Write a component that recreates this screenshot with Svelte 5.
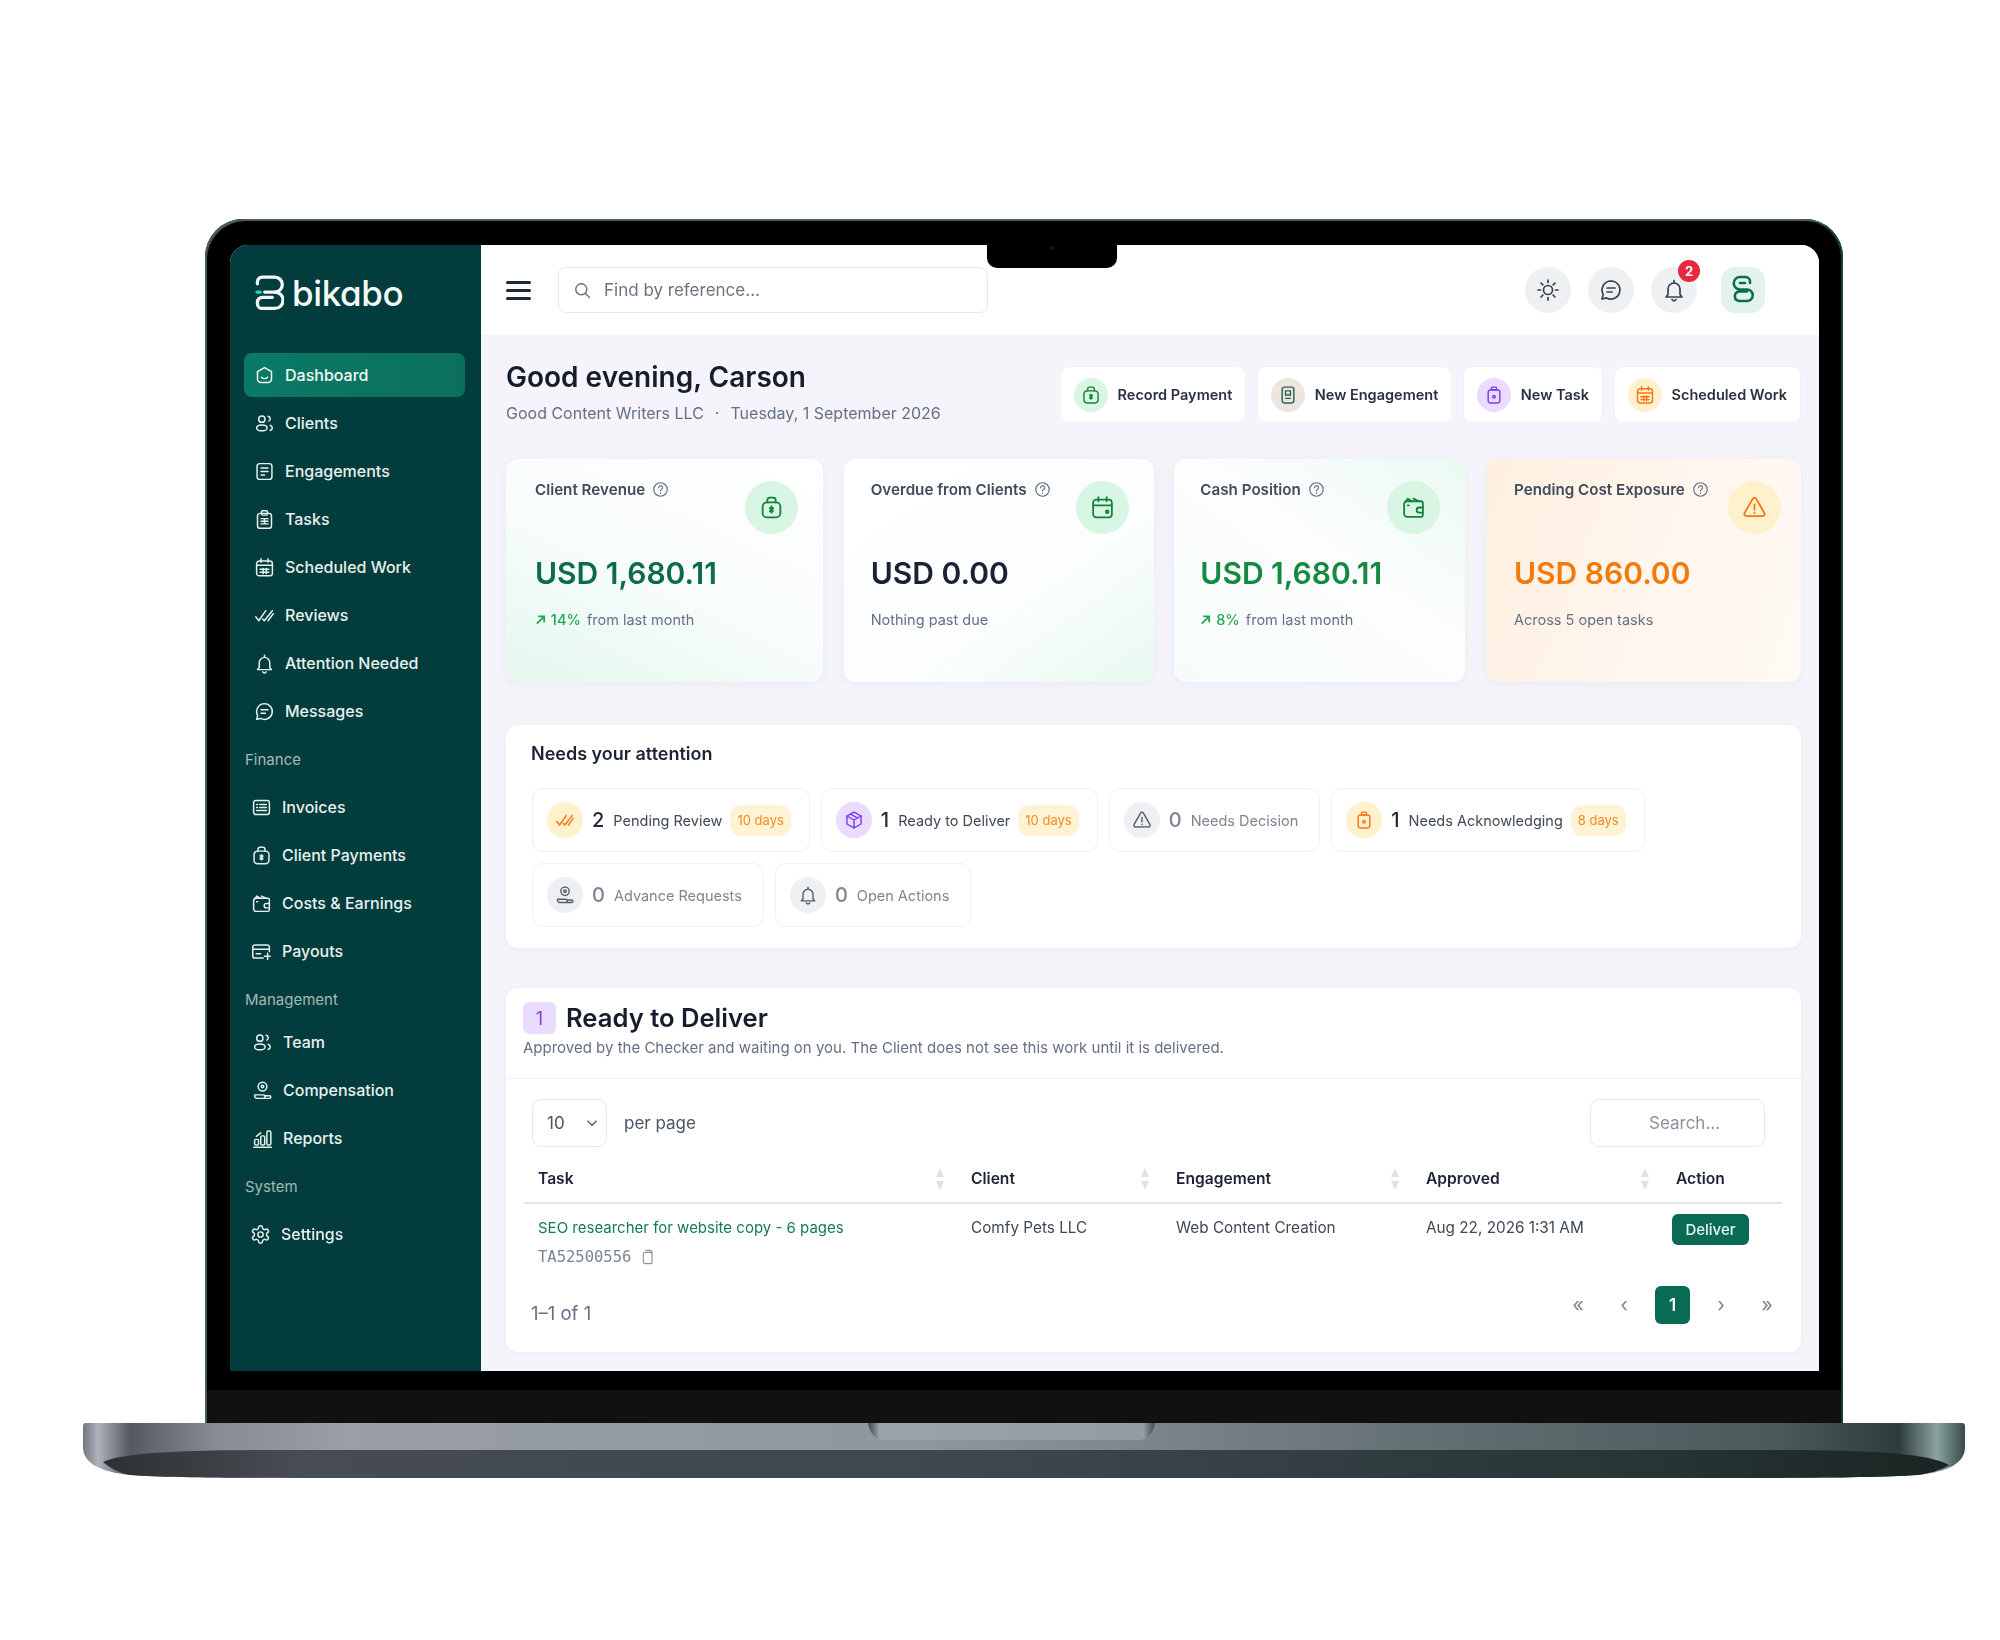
<script>
  const paths = {
    dash: '<path d="M12 3l8 4.5V16a4 4 0 0 1-4 4H8a4 4 0 0 1-4-4V7.5z"/><path d="M8.5 14c2 2 5 2 7 0"/>',
    users: '<circle cx="9" cy="7" r="3.6"/><ellipse cx="9" cy="17" rx="6" ry="3.4"/><path d="M16 3.6a3 3 0 0 1 1 5.6M18.5 14c1.6.7 2.4 1.8 2.4 3s-.8 2.3-2.4 3"/>',
    doc: '<rect x="3.5" y="3" width="17" height="18" rx="3"/><path d="M8 8h8M8 12h8M8 16h4"/>',
    clip: '<rect x="4" y="5" width="16" height="17" rx="3"/><rect x="8.5" y="2" width="7" height="5" rx="1.5"/><path d="M8 11h8M8 14h8M8 17h8M12 11v6"/>',
    cal: '<rect x="3" y="4.5" width="18" height="17" rx="3"/><path d="M3 9.5h18M8 2v4M16 2v4M7 14h10M7 17.5h10M10.5 13v6M14 13v6"/>',
    caldue: '<rect x="3" y="4.5" width="18" height="17" rx="3"/><path d="M3 10h18M8 2v4M16 2v4"/><circle cx="16.500" cy="16" r="1.300"/>',
    checks: '<path d="M2 13.5l3.5 4.5 8-11.5M10 16l1.7 2L21 6.5M16 18l6-8"/>',
    bell: '<path d="M6 16.5V11a6 6 0 0 1 12 0v5.5l2 2.5H4z"/><path d="M10 21.5a2.2 2.2 0 0 0 4 0M12 2.5v2"/>',
    chat: '<path d="M12 3a9 9 0 1 1-4.4 16.9L3 21l1.2-4.6A9 9 0 0 1 12 3z"/><path d="M8 10h8M8 14h5"/>',
    invoice: '<rect x="3" y="4" width="18" height="16" rx="2.5"/><path d="M6.5 8.5h1M10 8.5h7.5M6.5 12h1M10 12h7.5M6.5 15.5h11"/>',
    bag: '<rect x="3.5" y="7" width="17" height="14.5" rx="4"/><path d="M8 7V5a2.5 2.5 0 0 1 2.5-2.5h3A2.5 2.5 0 0 1 16 5v2"/><path d="M12 11v6M10.4 12.7c0-1.2 3.2-1.2 3.2 0 0 1.5-3.2 1.3-3.2 2.7 0 1.2 3.2 1.2 3.2 0"/>',
    wallet: '<path d="M3 8.5A2.5 2.5 0 0 1 5.5 6H19a2 2 0 0 1 2 2v11a2 2 0 0 1-2 2H6a3 3 0 0 1-3-3z"/><path d="M4 7l2.5-3.5 4 2.5M12 3.5 17 6M6.5 10h1"/><path d="M21 12h-3.5a2.5 2.5 0 0 0 0 5H21"/>',
    payouts: '<path d="M21 12V7a2.5 2.5 0 0 0-2.5-2.5h-14A2.5 2.5 0 0 0 2 7v10a2.5 2.5 0 0 0 2.5 2.5H14"/><path d="M2 9.5h19M6 14.5h5M19 14v7M15.5 17.5H22"/>',
    comp: '<circle cx="12" cy="7.5" r="5"/><circle cx="12" cy="7.5" r="1.5"/><path d="M3 17h10c2.5 0 2.5 4 0 4H6a3 3 0 0 1-3-3zM14 18h6a1.5 1.5 0 0 1 0 3h-6"/>',
    reports: '<path d="M2 22h20"/><rect x="3" y="13" width="4.5" height="6.5" rx="1.5"/><rect x="10" y="9" width="4.5" height="10.5" rx="1.5"/><rect x="17" y="3.5" width="4.5" height="16" rx="1.5"/><path d="M5 9.5l5-4"/>',
    gear: '<path d="M12.22 2h-.44a2 2 0 0 0-2 2v.18a2 2 0 0 1-1 1.73l-.43.25a2 2 0 0 1-2 0l-.15-.08a2 2 0 0 0-2.73.73l-.22.38a2 2 0 0 0 .73 2.73l.15.1a2 2 0 0 1 1 1.72v.51a2 2 0 0 1-1 1.74l-.15.09a2 2 0 0 0-.73 2.73l.22.38a2 2 0 0 0 2.73.73l.15-.08a2 2 0 0 1 2 0l.43.25a2 2 0 0 1 1 1.73V20a2 2 0 0 0 2 2h.44a2 2 0 0 0 2-2v-.18a2 2 0 0 1 1-1.73l.43-.25a2 2 0 0 1 2 0l.15.08a2 2 0 0 0 2.73-.73l.22-.39a2 2 0 0 0-.73-2.73l-.15-.08a2 2 0 0 1-1-1.74v-.5a2 2 0 0 1 1-1.74l.15-.09a2 2 0 0 0 .73-2.73l-.22-.38a2 2 0 0 0-2.73-.73l-.15.08a2 2 0 0 1-2 0l-.43-.25a2 2 0 0 1-1-1.73V4a2 2 0 0 0-2-2z"/><circle cx="12" cy="12" r="3"/>',
    sun: '<circle cx="12" cy="12" r="4.5"/><path d="M12 2v2.5M12 19.5V22M2 12h2.5M19.5 12H22M5 5l1.8 1.8M17.2 17.2 19 19M5 19l1.8-1.8M17.2 6.800 19 5"/>',
    search: '<circle cx="10.500" cy="10.500" r="7"/><path d="M16 16l5 5"/>',
    help: '<circle cx="12" cy="12" r="9.500"/><path d="M9.300 9.500a2.800 2.800 0 1 1 4.200 2.400c-1 .6-1.500 1.100-1.500 2.300M12 17.200v.3"/>',
    box: '<path d="M12 2.500l8.500 4.700v9.600L12 21.500l-8.500-4.700V7.200z"/><path d="M3.500 7.200 12 12l8.500-4.800M12 12v9.500M8 5l8.500 4.700"/>',
    warn: '<path d="M10.300 3.700a2 2 0 0 1 3.400 0l7.800 13.600a2 2 0 0 1-1.700 3H4.200a2 2 0 0 1-1.700-3z"/><path d="M12 9v5M12 17v.3"/>',
    copy: '<rect x="5" y="5" width="13" height="17" rx="3"/><path d="M9 2h5a4 4 0 0 1 4 4"/>',
    note: '<rect x="5" y="2.500" width="14" height="19" rx="2.500"/><path d="M9 7h6v5H9zM9 16h6"/>',
    taskbag: '<rect x="5" y="6" width="14" height="15.500" rx="2.500"/><rect x="9" y="2.500" width="6" height="3.500" rx="1"/><circle cx="12" cy="14" r="1.500"/>'
  };

  const navGroups = [
    {
      id: 'main',
      items: [
        { label: 'Dashboard', icon: 'dash', active: true },
        { label: 'Clients', icon: 'users' },
        { label: 'Engagements', icon: 'doc' },
        { label: 'Tasks', icon: 'clip' },
        { label: 'Scheduled Work', icon: 'cal' },
        { label: 'Reviews', icon: 'checks' },
        { label: 'Attention Needed', icon: 'bell' },
        { label: 'Messages', icon: 'chat' }
      ]
    },
    {
      id: 'finance',
      label: 'Finance',
      items: [
        { label: 'Invoices', icon: 'invoice' },
        { label: 'Client Payments', icon: 'bag' },
        { label: 'Costs & Earnings', icon: 'wallet' },
        { label: 'Payouts', icon: 'payouts' }
      ]
    },
    {
      id: 'management',
      label: 'Management',
      items: [
        { label: 'Team', icon: 'users' },
        { label: 'Compensation', icon: 'comp' },
        { label: 'Reports', icon: 'reports' }
      ]
    },
    {
      id: 'system',
      label: 'System',
      items: [{ label: 'Settings', icon: 'gear' }]
    }
  ];

  const quickActions = [
    { label: 'Record Payment', icon: 'bag', tone: 'green' },
    { label: 'New Engagement', icon: 'note', tone: 'beige' },
    { label: 'New Task', icon: 'taskbag', tone: 'purple' },
    { label: 'Scheduled Work', icon: 'cal', tone: 'orange' }
  ];

  const stats = [
    { id: 'revenue', title: 'Client Revenue', value: 'USD 1,680.11', trend: '14%', sub: 'from last month', icon: 'bag', tone: 'green' },
    { id: 'overdue', title: 'Overdue from Clients', value: 'USD 0.00', sub: 'Nothing past due', icon: 'caldue', tone: 'green' },
    { id: 'cash', title: 'Cash Position', value: 'USD 1,680.11', trend: '8%', sub: 'from last month', icon: 'wallet', tone: 'green' },
    { id: 'pending', title: 'Pending Cost Exposure', value: 'USD 860.00', sub: 'Across 5 open tasks', icon: 'warn', tone: 'orange' }
  ];

  const attention = [
    { count: 2, label: 'Pending Review', tag: '10 days', icon: 'checks', tone: 'orange' },
    { count: 1, label: 'Ready to Deliver', tag: '10 days', icon: 'box', tone: 'purple' },
    { count: 0, label: 'Needs Decision', icon: 'warn', tone: 'gray' },
    { count: 1, label: 'Needs Acknowledging', tag: '8 days', icon: 'taskbag', tone: 'orange' },
    { count: 0, label: 'Advance Requests', icon: 'comp', tone: 'gray' },
    { count: 0, label: 'Open Actions', icon: 'bell', tone: 'gray' }
  ];

  const columns = ['Task', 'Client', 'Engagement', 'Approved'];
</script>

{#snippet icon(name)}
  <svg class="icon" viewBox="0 0 24 24" fill="none" stroke="currentColor" stroke-width="1.7" stroke-linecap="round" stroke-linejoin="round">
    {@html paths[name]}
  </svg>
{/snippet}

<div class="page">
  <div class="lid">
    <div class="screen">
      <div class="notch"><span class="camera"></span></div>

      <aside class="sidebar">
        <div class="brand">
          <svg class="logo" viewBox="0 0 30 37" fill="none" stroke="#f2f7f6" stroke-width="3.400" stroke-linecap="round">
            <path d="M2.500 9V7a5 5 0 0 1 5-5h13a7.500 7.500 0 0 1 0 15.500H10"/>
            <path d="M20.500 17.500a8 8 0 0 1 0 17h-13a5 5 0 0 1-5-5V28a5 5 0 0 1 5-5H18"/>
            <path d="M2 17.500h3.500" stroke="#2fd0b0"/>
          </svg>
          <span class="wordmark">bikabo</span>
        </div>

        <nav>
          {#each navGroups as group}
            <div class="group {group.id}">
              {#if group.label}
                <div class="group-label">{group.label}</div>
              {/if}
              {#each group.items as item}
                <div class="nav-item" class:active={item.active}>
                  <span class="nav-icon">{@render icon(item.icon)}</span>
                  <span>{item.label}</span>
                </div>
              {/each}
            </div>
          {/each}
        </nav>
      </aside>

      <div class="main">
        <header class="topbar">
          <div class="burger"><span></span><span></span><span></span></div>
          <div class="find">
            <span class="find-icon">{@render icon('search')}</span>
            <span>Find by reference...</span>
          </div>
          <div class="top-actions">
            <span class="round">{@render icon('sun')}</span>
            <span class="round">{@render icon('chat')}</span>
            <span class="round bell">
              {@render icon('bell')}
              <span class="badge">2</span>
            </span>
            <span class="avatar">
              <svg viewBox="0 0 24 30" fill="none" stroke="#0c6b57" stroke-width="2.600" stroke-linecap="round">
                <path d="M19 8V6.500A4.500 4.500 0 0 0 14.500 2H9a5.500 5.500 0 0 0 0 12.500h7a5.700 5.700 0 0 1 0 11.500H8a4.800 4.800 0 0 1 0-9.500h8"/>
                <path d="M9 8h5"/>
              </svg>
            </span>
          </div>
        </header>

        <main class="content">
          <div class="title-row">
            <div>
              <h1>Good evening, Carson</h1>
              <p class="meta">
                <span>Good Content Writers LLC</span>
                <span>·</span>
                <span>Tuesday, 1 September 2026</span>
              </p>
            </div>
            <div class="quick">
              {#each quickActions as action}
                <button class="quick-btn">
                  <span class="dot small {action.tone}">{@render icon(action.icon)}</span>
                  {action.label}
                </button>
              {/each}
            </div>
          </div>

          <div class="stats">
            {#each stats as stat}
              <div class="stat {stat.id}">
                <div class="stat-text">
                  <div class="stat-title">
                    {stat.title}
                    <span class="help">{@render icon('help')}</span>
                  </div>
                  <div class="stat-value">{stat.value}</div>
                  <div class="stat-sub">
                    {#if stat.trend}
                      <span class="trend">
                        <svg viewBox="0 0 12 12" fill="none" stroke="currentColor" stroke-width="2"><path d="M2 10.500 10 2.500M3.500 2.500H10V9"/></svg>
                        {stat.trend}
                      </span>
                    {/if}
                    {stat.sub}
                  </div>
                </div>
                <span class="dot large {stat.tone}">{@render icon(stat.icon)}</span>
              </div>
            {/each}
          </div>

          <section class="panel attention">
            <h2>Needs your attention</h2>
            <div class="chips">
              {#each attention as chip}
                <div class="chip" class:muted={chip.count === 0}>
                  <span class="dot medium {chip.tone}">{@render icon(chip.icon)}</span>
                  <span class="chip-count">{chip.count}</span>
                  <span class="chip-label">{chip.label}</span>
                  {#if chip.tag}
                    <span class="chip-tag">{chip.tag}</span>
                  {/if}
                </div>
              {/each}
            </div>
          </section>

          <section class="panel deliver">
            <div class="deliver-head">
              <div class="deliver-title">
                <span class="count-box">1</span>
                <h2>Ready to Deliver</h2>
              </div>
              <p>Approved by the Checker and waiting on you. The Client does not see this work until it is delivered.</p>
            </div>

            <div class="deliver-body">
              <div class="table-tools">
                <div class="per-page">
                  <span class="select">
                    10
                    <svg viewBox="0 0 12 12" fill="none" stroke="#667085" stroke-width="1.500" stroke-linecap="round"><path d="M2.500 4.500 6 8l3.500-3.500"/></svg>
                  </span>
                  per page
                </div>
                <div class="table-search">Search...</div>
              </div>

              <table>
                <colgroup>
                  <col style="width: 433px" />
                  <col style="width: 205px" />
                  <col style="width: 250px" />
                  <col style="width: 250px" />
                  <col style="width: 120px" />
                </colgroup>
                <thead>
                  <tr>
                    {#each columns as col}
                      <th>
                        <span class="th-inner">
                          {col}
                          <svg class="sort" viewBox="0 0 10 22"><path d="M5 0l4 9H1zM5 22l-4-9h8z" fill="#dfe1e6" /></svg>
                        </span>
                      </th>
                    {/each}
                    <th>Action</th>
                  </tr>
                </thead>
                <tbody>
                  <tr>
                    <td>
                      <div class="task-link">SEO researcher for website copy - 6 pages</div>
                      <div class="task-ref">TA52500556 <span class="copy">{@render icon('copy')}</span></div>
                    </td>
                    <td>Comfy Pets LLC</td>
                    <td>Web Content Creation</td>
                    <td>Aug 22, 2026 1:31 AM</td>
                    <td><button class="deliver-btn">Deliver</button></td>
                  </tr>
                </tbody>
              </table>

              <div class="table-foot">
                <span class="range">1–1 of 1</span>
                <div class="pager">
                  <span>«</span>
                  <span>‹</span>
                  <span class="current">1</span>
                  <span>›</span>
                  <span>»</span>
                </div>
              </div>
            </div>
          </section>
        </main>
      </div>
    </div>
    <div class="chin"></div>
  </div>

  <svg class="base" viewBox="0 0 1882 57" width="1882" height="57">
    <defs>
      <linearGradient id="top-band">
        <stop offset="0" stop-color="#74777f" />
        <stop offset="0.008" stop-color="#aeb2bb" />
        <stop offset="0.025" stop-color="#55585e" />
        <stop offset="0.07" stop-color="#878b93" />
        <stop offset="0.14" stop-color="#9a9ea7" />
        <stop offset="0.45" stop-color="#8e979c" />
        <stop offset="0.72" stop-color="#626f72" />
        <stop offset="0.9" stop-color="#4a5a5b" />
        <stop offset="0.965" stop-color="#2f3c3c" />
        <stop offset="0.985" stop-color="#8aa4a1" />
        <stop offset="1" stop-color="#3a4847" />
      </linearGradient>
      <linearGradient id="low-band">
        <stop offset="0" stop-color="#2c2f33" />
        <stop offset="0.1" stop-color="#474c52" />
        <stop offset="0.5" stop-color="#3c474c" />
        <stop offset="0.85" stop-color="#263434" />
        <stop offset="1" stop-color="#1a2423" />
      </linearGradient>
      <linearGradient id="hinge">
        <stop offset="0" stop-color="#3f4549" />
        <stop offset="0.04" stop-color="#9aa3a8" />
        <stop offset="0.96" stop-color="#929da1" />
        <stop offset="1" stop-color="#3f4a4c" />
      </linearGradient>
    </defs>
    <path d="M3 0H1879Q1882 0 1882 3V24C1882 40 1865 49 1835 52 1790 55 1700 55 1600 55H280C180 55 90 55 47 52 17 49 0 40 0 24V3Q0 0 3 0Z" fill="url(#top-band)" />
    <path d="M20 39C40 30 95 27 200 27H1680C1785 27 1845 30 1866 42 1858 47 1848 50 1835 52 1790 55 1700 55 1600 55H280C180 55 90 55 47 52 36 50 27 45 20 39Z" fill="url(#low-band)" />
    <path d="M785 0H1072C1070 10 1066 15 1058 17H799C791 15 787 10 785 0Z" fill="url(#hinge)" />
  </svg>
</div>

<style>
  :global(body) {
    margin: 0;
    background: #fff;
    font-family: Inter, "Liberation Sans", sans-serif;
    color: #1a2233;
  }

  .page {
    width: 2000px;
    height: 1640px;
    padding-top: 219px;
    box-sizing: border-box;
    overflow: hidden;
  }

  .lid {
    width: 1638px;
    margin-left: 205px;
    box-sizing: border-box;
    padding: 26px 24px 0 25px;
    background: #000;
    border-radius: 38px 38px 0 0;
    box-shadow: inset 2px 2px 1px #4d5f5e, inset -2px 1px 1px #17443f;
  }

  .screen {
    position: relative;
    display: grid;
    grid-template-columns: 251px 1fr;
    height: 1126px;
    border-radius: 18px 18px 0 0;
    overflow: hidden;
    filter: blur(0.5px);
    background: #f4f4fa;
  }

  .chin {
    height: 52px;
    margin: 0 -22px 0 -23px;
    box-sizing: border-box;
    border-top: 19px solid #000;
    background: #111;
  }

  .base {
    display: block;
    margin-left: 83px;
  }

  .notch {
    position: absolute;
    top: 0;
    left: 757px;
    width: 130px;
    height: 23px;
    background: #000;
    border-radius: 0 0 10px 10px;
    display: flex;
    justify-content: center;
  }

  .camera {
    width: 4px;
    height: 4px;
    margin-top: 1px;
    border-radius: 50%;
    background: #0d1c22;
  }

  .icon {
    display: block;
    width: 100%;
    height: 100%;
  }

  /* sidebar */
  .sidebar {
    background: #033c3c;
    color: #e8f1ef;
  }

  .brand {
    height: 108px;
    padding: 0 0 13px 25px;
    box-sizing: border-box;
    display: flex;
    align-items: center;
    gap: 8px;
  }

  .logo {
    width: 29px;
    height: 36px;
  }

  .wordmark {
    font-size: 35px;
    font-weight: 500;
    letter-spacing: -0.4px;
    color: #f4f8f7;
    font-feature-settings: "cv11";
  }

  nav {
    display: flex;
    flex-direction: column;
    gap: 4px;
    margin: 0 16px 0 14px;
  }

  .group {
    display: flex;
    flex-direction: column;
    gap: 4px;
  }

  .group-label {
    height: 44px;
    display: flex;
    align-items: center;
    padding-left: 1px;
    font-size: 15px;
    color: #a3bab8;
  }

  .management .group-label {
    height: 39px;
    box-sizing: border-box;
    padding-top: 5px;
  }

  .nav-item {
    height: 44px;
    display: flex;
    align-items: center;
    gap: 10px;
    padding-left: 10px;
    border-radius: 8px;
    font-size: 16px;
    font-weight: 500;
  }

  .finance .nav-item {
    padding-left: 7px;
  }

  .management .nav-item {
    padding-left: 8px;
  }

  .system .nav-item {
    padding-left: 6px;
  }

  .nav-item.active {
    background: linear-gradient(90deg, #0a7a66, #0b6f5c);
    color: #f4faf8;
  }

  .nav-icon {
    width: 21px;
    height: 21px;
    flex: none;
  }

  /* top bar */
  .main {
    display: flex;
    flex-direction: column;
    min-width: 0;
  }

  .topbar {
    height: 90px;
    box-sizing: border-box;
    flex: none;
    background: #fff;
    display: flex;
    align-items: center;
    padding: 0 54px 0 25px;
  }

  .burger {
    width: 25px;
    display: flex;
    flex-direction: column;
    gap: 5px;
    margin-right: 27px;
  }

  .burger span {
    height: 3px;
    background: #1f2937;
    border-radius: 2px;
  }

  .find {
    width: 430px;
    height: 46px;
    box-sizing: border-box;
    border: 1.5px solid #e8e9ef;
    border-radius: 8px;
    display: flex;
    align-items: center;
    gap: 12px;
    padding-left: 14px;
    font-size: 17px;
    color: #6b7280;
  }

  .find-icon {
    width: 19px;
    height: 19px;
    color: #5f6875;
  }

  .top-actions {
    margin-left: auto;
    display: flex;
    align-items: center;
    gap: 17px;
  }

  .round {
    position: relative;
    width: 46px;
    height: 46px;
    box-sizing: border-box;
    padding: 11px;
    border-radius: 50%;
    background: #eff0f2;
    color: #374151;
  }

  .bell {
    margin-right: 7px;
  }

  .badge {
    position: absolute;
    top: -7px;
    right: -3px;
    width: 22px;
    height: 22px;
    border-radius: 50%;
    background: #e5283c;
    color: #fff;
    font-size: 13px;
    font-weight: 700;
    display: flex;
    align-items: center;
    justify-content: center;
  }

  .avatar {
    width: 44px;
    height: 46px;
    box-sizing: border-box;
    padding: 8px 10px;
    border-radius: 14px;
    background: #e3f3ec;
  }

  .avatar svg {
    display: block;
    width: 100%;
    height: 100%;
  }

  /* content */
  .content {
    flex: 1;
    padding: 31px 18px 0 25px;
    min-height: 0;
  }

  .title-row {
    display: flex;
    justify-content: space-between;
    height: 57px;
    margin-bottom: 36px;
  }

  h1 {
    margin: -7px 0 0;
    font-size: 28px;
    line-height: 36px;
    font-weight: 600;
    color: #161e2e;
  }

  .meta {
    display: flex;
    gap: 11px;
    margin: 7px 0 0;
    font-size: 16px;
    line-height: 22px;
    color: #667085;
  }

  .quick {
    display: flex;
    gap: 11px;
  }

  .quick-btn {
    display: flex;
    align-items: center;
    gap: 9.500px;
    height: 57px;
    padding: 0 13px;
    border: 1px solid #f0f1f6;
    border-radius: 9px;
    background: #fff;
    font-family: inherit;
    font-size: 14.500px;
    font-weight: 600;
    color: #2a3240;
    white-space: nowrap;
  }

  .dot {
    display: flex;
    flex: none;
    box-sizing: border-box;
    border-radius: 50%;
  }

  .dot.small {
    width: 34px;
    height: 34px;
    padding: 7px;
  }

  .dot.medium {
    width: 36px;
    height: 36px;
    padding: 8px;
  }

  .dot.large {
    width: 53px;
    height: 53px;
    padding: 14px;
  }

  .dot.green {
    background: #d9f5e3;
    color: #15803d;
  }

  .dot.orange {
    background: #fff1cc;
    color: #f97316;
  }

  .dot.purple {
    background: #e9dcff;
    color: #7c3aed;
  }

  .dot.beige {
    background: #ebe6df;
    color: #2f5d55;
  }

  .dot.gray {
    background: #eef0f3;
    color: #555e6c;
  }

  /* stat cards */
  .stats {
    display: grid;
    grid-template-columns: 317px 310px 291px 315px;
    justify-content: space-between;
    margin-bottom: 43px;
  }

  .stat {
    height: 223px;
    box-sizing: border-box;
    padding: 22px 25px 0 29px;
    display: flex;
    justify-content: space-between;
    align-items: flex-start;
    border-radius: 12px;
    background: #fff;
    box-shadow: 0 2px 8px rgba(60, 70, 110, 0.06);
  }

  .stat.revenue {
    background: linear-gradient(25deg, #e4f7ee 0%, #f9fdfc 50%, #fff 100%);
  }

  .stat.overdue {
    padding-left: 27px;
    background: linear-gradient(325deg, #e8f8f1 0%, #fbfefd 40%, #fff 100%);
  }

  .stat.cash {
    padding-left: 26px;
    background: linear-gradient(215deg, #eaf9f3 0%, #fdfefe 45%, #f5fcf9 100%);
  }

  .stat.pending {
    padding: 22px 20px 0 28px;
    background: linear-gradient(110deg, #feefe0 0%, #fff6ee 55%, #fffaf5 100%);
  }

  .stat-title {
    display: flex;
    align-items: center;
    gap: 7px;
    margin-top: -1px;
    height: 18px;
    font-size: 15.200px;
    font-weight: 600;
    color: #414b5a;
    white-space: nowrap;
  }

  .help {
    width: 17px;
    height: 17px;
    color: #667085;
  }

  .stat-value {
    margin-top: 55px;
    font-size: 30px;
    line-height: 40px;
    font-weight: 600;
    color: #1a2233;
    white-space: nowrap;
  }

  .revenue .stat-value {
    color: #0d6b45;
  }

  .cash .stat-value {
    color: #14893f;
  }

  .pending .stat-value {
    color: #f27a0c;
  }

  .stat-sub {
    margin-top: 17px;
    font-size: 14.500px;
    line-height: 20px;
    color: #667085;
    white-space: nowrap;
  }

  .trend {
    color: #22a652;
    font-weight: 500;
    margin-right: 2px;
  }

  .trend svg {
    width: 11px;
    height: 11px;
    margin-right: 1px;
  }

  /* panels */
  .panel {
    background: #fff;
    border-radius: 12px;
    box-shadow: 0 1px 6px rgba(60, 70, 110, 0.05);
  }

  .attention {
    height: 223px;
    box-sizing: border-box;
    padding: 17px 25px 0;
    margin-bottom: 40px;
  }

  .attention h2 {
    margin: 0 0 22px;
    font-size: 18px;
    line-height: 24px;
    font-weight: 600;
    color: #1c2433;
  }

  .chips {
    display: flex;
    flex-wrap: wrap;
    gap: 11px;
    width: 1150px;
    margin-left: 1px;
  }

  .chip {
    display: flex;
    align-items: center;
    height: 64px;
    box-sizing: border-box;
    padding: 0 18px 0 14px;
    border: 1.500px solid #eff0f4;
    border-radius: 11px;
    white-space: nowrap;
  }

  .chip.muted {
    padding-right: 21px;
  }

  .chip-count {
    margin: 0 9px;
    font-size: 20px;
    font-weight: 500;
    color: #1f2937;
  }

  .chip-label {
    font-size: 14.500px;
    color: #3f4856;
  }

  .chip.muted .chip-count,
  .chip.muted .chip-label {
    color: #7d8592;
  }

  .chip-tag {
    margin-left: 8px;
    padding: 0 7px;
    height: 31px;
    display: flex;
    align-items: center;
    border-radius: 11px;
    background: #fff3d6;
    color: #f58a1f;
    font-size: 13px;
  }

  .deliver {
    height: 364px;
  }

  .deliver-head {
    height: 91px;
    box-sizing: border-box;
    padding: 14px 17px 0;
    border-bottom: 1px solid #f0f1f5;
  }

  .deliver-title {
    display: flex;
    align-items: center;
    gap: 10px;
  }

  .count-box {
    width: 33px;
    height: 32px;
    display: flex;
    align-items: center;
    justify-content: center;
    border-radius: 6px;
    background: #e9dcfe;
    color: #7c3aed;
    font-size: 18px;
  }

  .deliver h2 {
    margin: 0;
    font-size: 25.600px;
    line-height: 32px;
    font-weight: 600;
    color: #161e2e;
  }

  .deliver-head p {
    margin: 4px 0 0;
    font-size: 15px;
    line-height: 20px;
    color: #667085;
  }

  .deliver-body {
    padding: 20px 19px 0 18px;
  }

  .table-tools {
    display: flex;
    justify-content: space-between;
    align-items: center;
    margin: 0 17px 0 8px;
    height: 48px;
  }

  .per-page {
    display: flex;
    align-items: center;
    gap: 17px;
    font-size: 17px;
    color: #4b5563;
  }

  .select {
    width: 75px;
    height: 48px;
    box-sizing: border-box;
    display: flex;
    align-items: center;
    justify-content: space-between;
    padding: 0 7px 0 14px;
    border: 1.500px solid #e8e9ef;
    border-radius: 9px;
    font-size: 17px;
  }

  .select svg {
    width: 14px;
    height: 14px;
  }

  .table-search {
    width: 175px;
    height: 48px;
    box-sizing: border-box;
    padding-left: 58px;
    display: flex;
    align-items: center;
    border: 1.500px solid #e8e9ef;
    border-radius: 9px;
    font-size: 17px;
    color: #8a919c;
  }

  table {
    width: 1258px;
    table-layout: fixed;
    border-collapse: collapse;
    margin-top: 8px;
    font-size: 15.300px;
  }

  th {
    height: 47px;
    padding: 0 14px;
    text-align: left;
    font-size: 15.600px;
    font-weight: 600;
    color: #1a2233;
    border-bottom: 2px solid #e2e3e7;
  }

  .th-inner {
    display: flex;
    justify-content: space-between;
    align-items: center;
    margin-right: -2px;
  }

  .sort {
    width: 10px;
    height: 22px;
  }

  td {
    padding: 14px 14px 0;
    vertical-align: top;
    color: #3f4856;
    white-space: nowrap;
  }

  .task-link {
    line-height: 20px;
    font-size: 15px;
    color: #15785f;
  }

  .task-ref {
    display: flex;
    align-items: center;
    gap: 9px;
    margin-top: 9px;
    font-family: "DejaVu Sans Mono", monospace;
    font-size: 15.500px;
    line-height: 20px;
    color: #7b8494;
  }

  .copy {
    width: 16px;
    height: 18px;
    color: #8a919c;
  }

  .deliver-btn {
    width: 77px;
    height: 31px;
    margin: -4px 0 0 -4px;
    display: block;
    border: none;
    border-radius: 6px;
    background: #0a6b55;
    color: #eaf6f2;
    font-family: inherit;
    font-size: 15px;
    font-weight: 500;
  }

  .table-foot {
    display: flex;
    justify-content: space-between;
    align-items: center;
    margin: 19px 0 0 7px;
    height: 38px;
  }

  .range {
    font-size: 18.500px;
    color: #667085;
    margin-top: 16px;
  }

  .pager {
    display: flex;
    align-items: center;
    gap: 24px;
    color: #7d8592;
    font-size: 20px;
    margin-right: 4px;
  }

  .pager span {
    width: 22px;
    text-align: center;
  }

  .pager .current {
    width: 35px;
    height: 38px;
    margin: 0 -4px;
    line-height: 38px;
    border-radius: 6px;
    background: #0a6b55;
    color: #fff;
    font-size: 17px;
    font-weight: 600;
  }
</style>
